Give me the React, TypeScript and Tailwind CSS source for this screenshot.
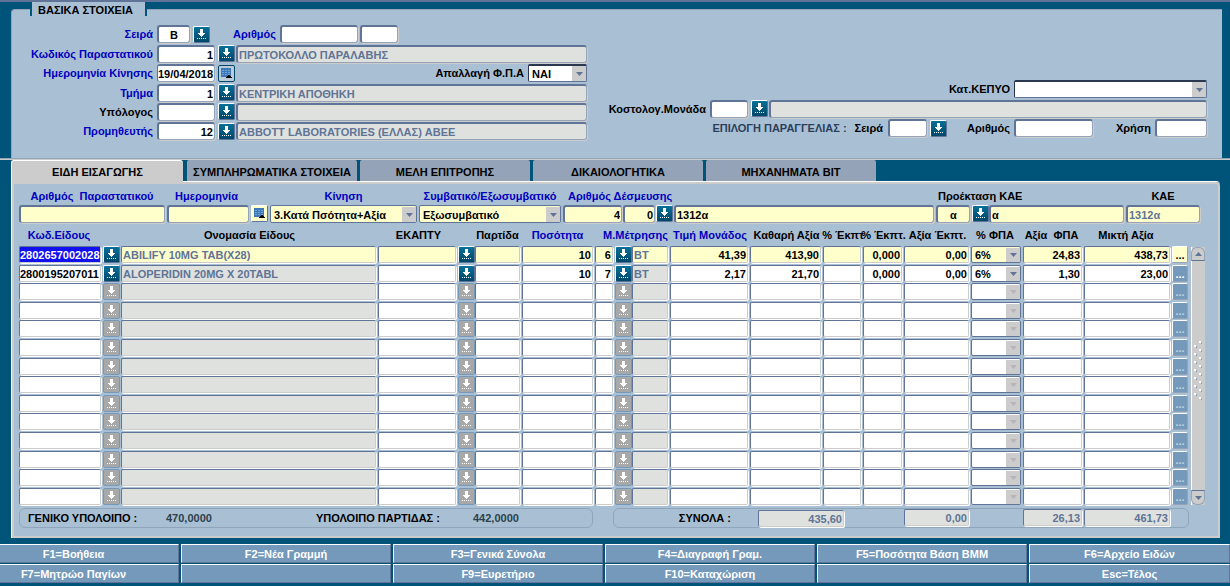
import React from 'react';
import clsx from 'clsx';

type FieldProps = {
  id?: string;
  label?: string;
  value?: string;
  tone?: 'white' | 'gray' | 'yellow' | 'selected';
  align?: 'left' | 'center' | 'right';
  muted?: boolean;
  className?: string;
};

const tones = {
  white: 'bg-white',
  gray: 'bg-[#dee1de]',
  yellow: 'bg-[#ffffcc]',
  selected: 'bg-[#1010f0]',
};

const Field: React.FC<FieldProps> = ({ id, label, value = '', tone = 'white', align = 'left', muted, className }) => (
  <input
    id={id}
    aria-label={label}
    defaultValue={value}
    readOnly={tone === 'gray'}
    className={clsx(
      'block h-[18px] min-w-0 rounded-[3px] border-t-2 border-l-2 border-r border-b border-t-[#5f7496] border-l-[#5f7496] border-r-[#94a3b7] border-b-[#94a3b7] pt-px shadow-[1px_1px_0_#cccccc] outline-none',
      tones[tone],
      tone === 'selected' ? 'text-white' : muted ? 'text-[#5f7496]' : 'text-black',
      align === 'right' && 'pr-px text-right',
      align === 'center' && 'text-center',
      align === 'left' && tone !== 'selected' && 'pl-px',
      className,
    )}
  />
);

type CellProps = FieldProps & { label: string };

const Cell: React.FC<CellProps> = ({ label, value = '', tone = 'white', align = 'left', muted, className }) => (
  <input
    aria-label={label}
    defaultValue={value}
    readOnly={tone === 'gray'}
    className={clsx(
      'block h-[17px] w-full min-w-0 rounded-[2px] border border-t-[#5f7496] border-l-[#5f7496] border-r-[#cccccc] border-b-[#cccccc] shadow-[1px_1px_0_#ffffff] outline-none',
      tones[tone],
      tone === 'selected' ? 'text-white' : muted ? 'text-[#5f7496]' : 'text-black',
      align === 'right' && 'pr-px text-right',
      align === 'left' && tone !== 'selected' && 'pl-px',
      className,
    )}
  />
);

const LovButton: React.FC<{ label: string; disabled?: boolean }> = ({ label, disabled }) => (
  <button
    type="button"
    aria-label={label}
    disabled={disabled}
    className={clsx(
      'block size-[17px] shrink-0 rounded-[2px] border',
      disabled
        ? 'border-[#7499ba] bg-[#a8a8a8]'
        : 'border-t-white border-l-white border-r-[#5f7496] border-b-[#5f7496] bg-linear-to-b from-[#087099] to-[#00476a]',
    )}
  >
    <svg viewBox="0 0 15 15" className="size-[15px]" shapeRendering="crispEdges">
      <path d="M6 2h3v4h2v1h-1v1H9v1H8v1H7V9H6V8H5V7H4V6h2z" fill="white" />
      <path d="M3 11.5h10" stroke="white" strokeDasharray="1 1" />
    </svg>
  </button>
);

const CalendarButton: React.FC<{ label: string; yellow?: boolean }> = ({ label, yellow }) => (
  <button
    type="button"
    aria-label={label}
    className={clsx(
      'block size-[17px] shrink-0 rounded-[2px] border',
      yellow
        ? 'border-t-white border-l-white border-r-[#5f7496] border-b-[#5f7496] bg-[#ffffcc]'
        : 'border-[#00476a] bg-[#bccbd8]',
    )}
  >
    <svg viewBox="0 0 15 15" className="size-[15px]" shapeRendering="crispEdges">
      <path d="M2 2h10v9H2z" fill="#3c78b8" />
      <path d="M3 4.5h8M3 6.5h8M3 8.5h8" stroke="#6fa3d8" strokeDasharray="2 1" />
      <path d="M7 12h6v-1h-1v-1h-1V9h-2v1H8v1H7z" fill="black" />
    </svg>
  </button>
);

type PickProps = {
  id?: string;
  label?: string;
  options: string[];
  tone?: 'white' | 'yellow';
  disabled?: boolean;
  dark?: boolean;
  className?: string;
};

const Pick: React.FC<PickProps> = ({ id, label, options, tone = 'white', disabled, dark, className }) => (
  <span className={clsx('relative block', className)}>
    <select
      id={id}
      aria-label={label}
      disabled={disabled}
      className={clsx(
        'block size-full appearance-none rounded-[2px] border pt-px pl-[3px] text-black opacity-100 outline-none',
        dark ? 'border-t-2 border-t-[#2b3650] border-r-[#5f7496] border-b-[#5f7496] border-l-[#2b3650]' : 'border-[#5f7496]',
        tones[tone],
      )}
    >
      {options.map((option) => (
        <option key={option}>{option}</option>
      ))}
    </select>
    <span className="pointer-events-none absolute top-0.5 right-px bottom-px flex w-[14px] items-center justify-center bg-[#cccccc]">
      <svg viewBox="0 0 7 4" className="h-1 w-[7px]">
        <path d="M0 0h7L3.5 4z" fill={disabled ? '#bdb3b3' : '#5f7496'} />
      </svg>
    </span>
  </span>
);

const labelBlue = 'text-[#0000c0]';

type FormRowProps = {
  id: string;
  label: string;
  black?: boolean;
  children: React.ReactNode;
};

const FormRow: React.FC<FormRowProps> = ({ id, label, black, children }) => (
  <div className="flex items-center">
    <label htmlFor={id} className={clsx('w-[141px] shrink-0 text-right whitespace-nowrap', !black && labelBlue)}>
      {label}
    </label>
    {children}
  </div>
);

const BasicInfo: React.FC = () => (
  <section className="bg-[#005379] pt-[7px] pr-2 pl-[11px]">
    <div
      role="group"
      aria-labelledby="basic-title"
      className="relative grid h-[149px] grid-cols-[575fr_604fr] gap-x-4 rounded-tl-sm border-t border-l border-[#94a3b7] bg-[#a9bfd3] pt-[14px] pr-[15px]"
    >
      <h2
        id="basic-title"
        className="absolute -top-2 left-[18px] flex h-[14px] w-[117px] items-center border-x-2 border-[#005379] bg-[#a9bfd3] pt-0.5 pl-[6px] whitespace-nowrap"
      >
        ΒΑΣΙΚΑ ΣΤΟΙΧΕΙΑ
      </h2>

      <div className="grid content-start grid-rows-[20px_19px_20px_19px_19px_20px]">
        <FormRow id="seira" label="Σειρά">
          <Field id="seira" value="Β" align="center" className="mr-[3px] ml-1 w-[33px]" />
          <LovButton label="Επιλογή σειράς" />
          <label htmlFor="arithmos" className={clsx('w-[66px] text-right', labelBlue)}>
            Αριθμός
          </label>
          <Field id="arithmos" className="ml-1 w-[78px]" />
          <Field label="Αριθμός β" className="ml-0.5 w-[38px]" />
        </FormRow>
        <FormRow id="kodikos" label="Κωδικός Παραστατικού">
          <Field id="kodikos" value="1" align="right" className="mr-[3px] ml-1 w-[58px]" />
          <LovButton label="Επιλογή παραστατικού" />
          <Field label="Παραστατικό" value="ΠΡΩΤΟΚΟΛΛΟ ΠΑΡΑΛΑΒΗΣ" tone="gray" muted className="ml-px flex-1" />
        </FormRow>
        <FormRow id="imerominia" label="Ημερομηνία Κίνησης">
          <Field id="imerominia" value="19/04/2018" className="mr-[3px] ml-1 w-[58px] border-l! pl-0!" />
          <CalendarButton label="Ημερολόγιο" />
          <label htmlFor="fpa" className="flex-1 pr-1 text-right">
            Απαλλαγή Φ.Π.Α
          </label>
          <Pick id="fpa" options={['ΝΑΙ', 'ΟΧΙ']} dark className="h-[18px] w-[59px]" />
        </FormRow>
        <FormRow id="tmima" label="Τμήμα">
          <Field id="tmima" value="1" align="right" className="mr-[3px] ml-1 w-[58px]" />
          <LovButton label="Επιλογή τμήματος" />
          <Field label="Περιγραφή τμήματος" value="ΚΕΝΤΡΙΚΗ ΑΠΟΘΗΚΗ" tone="gray" muted className="ml-px flex-1" />
        </FormRow>
        <FormRow id="ypologos" label="Υπόλογος" black>
          <Field id="ypologos" className="mr-[3px] ml-1 w-[58px]" />
          <LovButton label="Επιλογή υπολόγου" />
          <Field label="Ονομασία υπολόγου" tone="gray" className="ml-px flex-1" />
        </FormRow>
        <FormRow id="promitheftis" label="Προμηθευτής">
          <Field id="promitheftis" value="12" align="right" className="mr-[3px] ml-1 w-[58px]" />
          <LovButton label="Επιλογή προμηθευτή" />
          <Field label="Ονομασία προμηθευτή" value="ABBOTT LABORATORIES (ΕΛΛΑΣ) ΑΒΕΕ" tone="gray" muted className="ml-px flex-1" />
        </FormRow>
      </div>

      <div className="grid content-start grid-rows-[20px_19px_20px] pt-[55px]">
        <div className="flex items-center justify-end">
          <label htmlFor="kepyo" className="pr-1">
            Κατ.ΚΕΠΥΟ
          </label>
          <Pick id="kepyo" options={['']} dark className="h-[18px] w-[193px]" />
        </div>
        <div className="flex items-center">
          <label htmlFor="monada" className="w-[107px] pr-1 text-right whitespace-nowrap">
            Κοστολογ.Μονάδα
          </label>
          <Field id="monada" className="mr-[3px] w-[38px]" />
          <LovButton label="Επιλογή μονάδας" />
          <Field label="Περιγραφή μονάδας" tone="gray" className="ml-px flex-1" />
        </div>
        <div className="flex items-center justify-end">
          <span className="pr-2 whitespace-nowrap text-[#2b3f5c]">ΕΠΙΛΟΓΗ ΠΑΡΑΓΓΕΛΙΑΣ :</span>
          <label htmlFor="order-seira" className="pr-[5px]">
            Σειρά
          </label>
          <Field id="order-seira" className="mr-[3px] w-[39px]" />
          <LovButton label="Επιλογή παραγγελίας" />
          <label htmlFor="order-arithmos" className="w-[67px] pr-1 text-right">
            Αριθμός
          </label>
          <Field id="order-arithmos" className="w-[79px]" />
          <label htmlFor="order-xrisi" className="w-[62px] pr-1 text-right">
            Χρήση
          </label>
          <Field id="order-xrisi" className="w-[52px]" />
        </div>
      </div>
    </div>
  </section>
);

const tabs = [
  { title: 'ΕΙΔΗ ΕΙΣΑΓΩΓΗΣ', active: true },
  { title: 'ΣΥΜΠΛΗΡΩΜΑΤΙΚΑ ΣΤΟΙΧΕΙΑ' },
  { title: 'ΜΕΛΗ ΕΠΙΤΡΟΠΗΣ' },
  { title: 'ΔΙΚΑΙΟΛΟΓΗΤΙΚΑ' },
  { title: 'ΜΗΧΑΝΗΜΑΤΑ ΒΙΤ' },
];

const Tabs: React.FC = () => (
  <div role="tablist" className="flex h-[21px] gap-[3px]">
    {tabs.map((tab) => (
      <button
        key={tab.title}
        type="button"
        role="tab"
        aria-selected={!!tab.active}
        className={clsx(
          'whitespace-nowrap',
          tab.active
            ? 'mr-px -mb-px w-[172px] rounded-t-[3px] border-t border-l border-white bg-[#cccccc]'
            : 'w-[170px] rounded-t-[2px] bg-[#94a3b7] pt-0.5',
        )}
      >
        {tab.title}
      </button>
    ))}
  </div>
);

const Filters: React.FC = () => (
  <div className="flex gap-0.5 pr-[18px]">
    <div className="w-[146px]">
      <label htmlFor="f-number" className={clsx('flex h-4 justify-center whitespace-pre', labelBlue)}>
        {'Αριθμός  Παραστατικού'}
      </label>
      <Field id="f-number" tone="yellow" className="w-full" />
    </div>
    <div className="w-[101px]">
      <label htmlFor="f-date" className={clsx('flex h-4 justify-center pr-[22px]', labelBlue)}>
        Ημερομηνία
      </label>
      <div className="flex justify-between">
        <Field id="f-date" tone="yellow" className="w-[82px]" />
        <CalendarButton label="Ημερολόγιο" yellow />
      </div>
    </div>
    <div className="w-[147px]">
      <label htmlFor="f-move" className={clsx('flex h-4 justify-center', labelBlue)}>
        Κίνηση
      </label>
      <Pick id="f-move" options={['3.Κατά Πσότητα+Αξία']} tone="yellow" className="h-[18px]" />
    </div>
    <div className="w-[142px]">
      <label htmlFor="f-type" className={clsx('flex h-4 justify-center whitespace-nowrap', labelBlue)}>
        Συμβατικό/Εξωσυμβατικό
      </label>
      <Pick id="f-type" options={['Εξωσυμβατικό', 'Συμβατικό']} tone="yellow" className="h-[18px]" />
    </div>
    <div className="min-w-0 flex-1">
      <label htmlFor="f-bind" className={clsx('block h-4 pl-[5px]', labelBlue)}>
        Αριθμός Δέσμευσης
      </label>
      <div className="flex">
        <Field id="f-bind" value="4" tone="yellow" align="right" className="w-[59px]" />
        <Field label="Υποαριθμός" value="0" tone="yellow" align="right" className="mr-px ml-px w-8" />
        <LovButton label="Επιλογή δέσμευσης" />
        <Field label="Περιγραφή δέσμευσης" value="1312α" tone="yellow" className="ml-px flex-1" />
      </div>
    </div>
    <div className="w-[188px]">
      <label htmlFor="f-ext" className="block h-4 pl-0.5">
        Προέκταση ΚΑΕ
      </label>
      <div className="flex">
        <Field id="f-ext" value="α" tone="yellow" align="center" className="mr-0.5 w-[34px]" />
        <LovButton label="Επιλογή ΚΑΕ" />
        <Field label="Περιγραφή ΚΑΕ" value="α" tone="yellow" className="flex-1" />
      </div>
    </div>
    <div className="w-[74px]">
      <label htmlFor="f-kae" className="flex h-4 justify-center">
        ΚΑΕ
      </label>
      <Field id="f-kae" value="1312α" tone="yellow" muted className="w-full" />
    </div>
  </div>
);

const headers = [
  { title: 'Κωδ.Είδους', blue: true, span: 2, className: 'pr-[22px]' },
  { title: 'Ονομασία Είδους' },
  { title: 'ΕΚΑΠΤΥ', span: 2, className: 'pr-4' },
  { title: 'Παρτίδα', className: 'pr-0.5' },
  { title: 'Ποσότητα', blue: true, className: 'pr-0.5' },
  { title: 'Μ.Μέτρησης', blue: true, span: 3, className: 'pl-[6px]' },
  { title: 'Τιμή Μονάδος', blue: true },
  { title: 'Καθαρή Αξία' },
  { title: '% Έκπτ' },
  { title: '% Έκπτ.' },
  { title: 'Αξία Έκπτ.' },
  { title: '% ΦΠΑ', className: 'pr-1' },
  { title: 'Αξία  ΦΠΑ', className: 'pr-1' },
  { title: 'Μικτή Αξία', className: 'pr-1' },
];

const items = [
  { code: '2802657002028', name: 'ABILIFY 10MG TAB(X28)', qty: '10', unit: '6', unitName: 'ΒΤ', price: '41,39', net: '413,90', pct: '0,000', disc: '0,00', vat: '6%', vatAmount: '24,83', gross: '438,73' },
  { code: '2800195207011', name: 'ALOPERIDIN 20MG X 20TABL', qty: '10', unit: '7', unitName: 'ΒΤ', price: '2,17', net: '21,70', pct: '0,000', disc: '0,00', vat: '6%', vatAmount: '1,30', gross: '23,00' },
];

const rows = Array.from({ length: 14 }, (_, i) => items[i]);

const ItemsTable: React.FC = () => (
  <table className="w-full table-fixed border-collapse">
    <colgroup>
      <col className="w-[84px]" />
      <col className="w-[18px]" />
      <col />
      <col className="w-[80px]" />
      <col className="w-[17px]" />
      <col className="w-[47px]" />
      <col className="w-[73px]" />
      <col className="w-[20px]" />
      <col className="w-[17px]" />
      <col className="w-[38px]" />
      <col className="w-[80px]" />
      <col className="w-[73px]" />
      <col className="w-[40px]" />
      <col className="w-[41px]" />
      <col className="w-[67px]" />
      <col className="w-[52px]" />
      <col className="w-[61px]" />
      <col className="w-[88px]" />
      <col className="w-[18px]" />
    </colgroup>
    <thead>
      <tr className="h-[23px]">
        {headers.map((header, i) => (
          <th key={i} colSpan={header.span ?? 1} className={clsx('p-0', header.blue && labelBlue)}>
            <span className={clsx('flex justify-center whitespace-pre', header.className)}>{header.title}</span>
          </th>
        ))}
        <td />
      </tr>
    </thead>
    <tbody>
      {rows.map((row, i) => {
        const base = i === 0 ? 'yellow' : 'white';
        const fixed = i === 0 ? 'yellow' : 'gray';
        return (
          <tr key={i} className="h-[19px] align-top nth-[5n+2]:h-[18px] nth-[5n+4]:h-[18px] [&>td]:p-0 [&>td]:pr-0.5">
            <td><Cell label="Κωδ.Είδους" value={row?.code} tone={i === 0 ? 'selected' : 'white'} className="pl-0!" /></td>
            <td><LovButton label="Επιλογή είδους" disabled={!row} /></td>
            <td><Cell label="Ονομασία Είδους" value={row?.name} tone={fixed} muted /></td>
            <td><Cell label="ΕΚΑΠΤΥ" tone={base} /></td>
            <td><LovButton label="Επιλογή παρτίδας" disabled={!row} /></td>
            <td><Cell label="Παρτίδα" tone={base} /></td>
            <td><Cell label="Ποσότητα" value={row?.qty} tone={base} align="right" /></td>
            <td><Cell label="Μονάδα" value={row?.unit} tone={base} align="right" /></td>
            <td><LovButton label="Επιλογή μονάδας" disabled={!row} /></td>
            <td><Cell label="Μ.Μέτρησης" value={row?.unitName} tone={fixed} muted /></td>
            <td><Cell label="Τιμή Μονάδος" value={row?.price} tone={base} align="right" /></td>
            <td><Cell label="Καθαρή Αξία" value={row?.net} tone={base} align="right" /></td>
            <td><Cell label="% Έκπτ" tone={base} /></td>
            <td><Cell label="% Έκπτ." value={row?.pct} tone={base} align="right" /></td>
            <td><Cell label="Αξία Έκπτ." value={row?.disc} tone={base} align="right" /></td>
            <td><Pick label="% ΦΠΑ" options={[row?.vat ?? '']} tone={base} disabled={!row} className="h-[17px]" /></td>
            <td><Cell label="Αξία ΦΠΑ" value={row?.vatAmount} tone={base} align="right" /></td>
            <td><Cell label="Μικτή Αξία" value={row?.gross} tone={base} align="right" /></td>
            <td>
              <button
                type="button"
                className={clsx(
                  'block h-[17px] w-4 rounded-[2px] border border-t-white border-l-white border-r-[#94a3b7] border-b-[#94a3b7] leading-3',
                  i === 0 ? 'bg-[#ffffcc] text-black' : 'bg-[#7499ba]',
                  i === 1 && 'text-white',
                  i > 1 && 'text-[#c3d3e2]',
                )}
              >
                ...
              </button>
            </td>
          </tr>
        );
      })}
    </tbody>
  </table>
);

const ScrollBar: React.FC = () => (
  <div className="mt-6 mb-px ml-px flex w-[14px] shrink-0 flex-col justify-between border-l border-white bg-[#cccccc]">
    <button type="button" aria-label="Πάνω" className="-ml-px flex h-[14px] items-center justify-center rounded-t-md border border-b-[#5f7496] border-[#94a3b7] bg-[#cccccc]">
      <svg viewBox="0 0 7 4" className="h-1 w-[7px]"><path d="M0 4h7L3.5 0z" fill="#5f7496" /></svg>
    </button>
    <svg viewBox="0 0 12 70" className="h-[70px] w-3" shapeRendering="crispEdges">
      {Array.from({ length: 15 }, (_, i) => (
        <g key={i}>
          <rect x={i % 2 ? 2 : 7} y={i * 4} width="2" height="2" fill="white" />
          <rect x={i % 2 ? 4 : 9} y={i * 4 + 1} width="1" height="2" fill="#94a3b7" />
        </g>
      ))}
    </svg>
    <button type="button" aria-label="Κάτω" className="-ml-px flex h-[15px] items-center justify-center rounded-b-md border border-t-[#5f7496] border-[#94a3b7] bg-[#cccccc]">
      <svg viewBox="0 0 7 4" className="h-1 w-[7px]"><path d="M0 0h7L3.5 4z" fill="#5f7496" /></svg>
    </button>
  </div>
);

const Totals: React.FC = () => (
  <div className="mt-0.5 flex h-5 justify-between pr-[29px]">
    <div className="flex w-[574px] items-center rounded-md border border-[#8fa5bb] pl-2">
      <span className="w-[138px]">ΓΕΝΙΚΟ ΥΠΟΛΟΙΠΟ :</span>
      <span className="w-[150px] text-[#2b3f4c]">470,0000</span>
      <span className="w-[157px]">ΥΠΟΛΟΙΠΟ ΠΑΡΤΙΔΑΣ :</span>
      <span className="text-[#2b3f4c]">442,0000</span>
    </div>
    <div className="flex w-[576px] items-start justify-end rounded-md border border-[#8fa5bb] pr-[18px]">
      <span className="mr-[27px] self-center">ΣΥΝΟΛΑ :</span>
      <Cell label="Σύνολο καθαρής αξίας" value="435,60" tone="gray" align="right" muted className="mt-px mr-[60px] w-[86px]! shrink-0" />
      <Cell label="Σύνολο έκπτωσης" value="0,00" tone="gray" align="right" muted className="mr-[54px] w-[65px]! shrink-0" />
      <Cell label="Σύνολο ΦΠΑ" value="26,13" tone="gray" align="right" muted className="mr-0.5 w-[59px]! shrink-0" />
      <Cell label="Σύνολο μικτής αξίας" value="461,73" tone="gray" align="right" muted className="w-[86px]! shrink-0" />
    </div>
  </div>
);

const functionKeys = [
  'F1=Βοήθεια', 'F2=Νέα Γραμμή', 'F3=Γενικά Σύνολα', 'F4=Διαγραφή Γραμ.', 'F5=Ποσότητα Βάση ΒΜΜ', 'F6=Αρχείο Ειδών',
  'F7=Μητρώο Παγίων', '', 'F9=Ευρετήριο', 'F10=Καταχώριση', '', 'Esc=Τέλος',
];

const App: React.FC = () => (
  <main className="min-h-screen bg-[#005379] font-['Liberation_Sans',sans-serif] text-[11px] leading-[14px] font-bold text-black">
    <div className="h-0.5 bg-[#5f7496]" />
    <BasicInfo />
    <div className="h-0.5 border-t border-[#94a3b7] bg-[#cccccc]" />

    <div className="mr-[10px] ml-[11px]">
      <Tabs />
      <div className="rounded-tr-sm border-t border-l border-white">
        <div className="rounded-tr-sm border-2 border-[#cccccc] bg-[#a9bfd3] pt-[5px] pb-2 pl-[5px]">
          <Filters />
          <div className="flex pr-[13px]">
            <div className="min-w-0 flex-1">
              <ItemsTable />
            </div>
            <ScrollBar />
          </div>
          <Totals />
        </div>
      </div>
    </div>

    {/* function keys */}
    <nav className="mt-[6px] grid grid-cols-[179fr_210fr_210fr_210fr_210fr_201fr] gap-x-0.5 gap-y-px">
      {functionKeys.map((title, i) => (
        <button
          key={i}
          type="button"
          aria-label={title || 'Κενό'}
          className={clsx(
            'h-[19px] border border-t-white border-l-white border-r-[#5f7496] border-b-[#5f7496] bg-[#7499ba] whitespace-nowrap text-white',
            i % 6 === 0 && 'border-l-0 pr-[31px]',
          )}
        >
          {title}
        </button>
      ))}
    </nav>
  </main>
);

export default App;
